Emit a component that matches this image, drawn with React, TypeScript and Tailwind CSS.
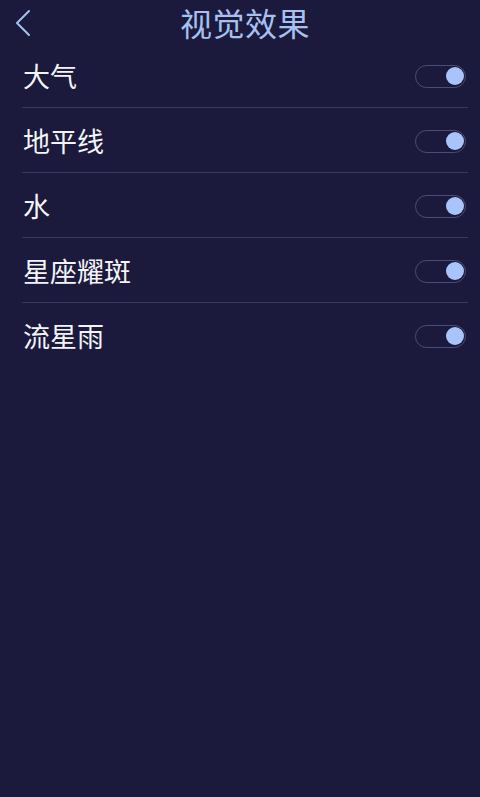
import React, { useState } from 'react';

const items = ['大气', '地平线', '水', '星座耀斑', '流星雨'];

const Toggle = ({ on, onClick }: { on: boolean; onClick: () => void }) => (
  <button
    onClick={onClick}
    className="relative w-[51px] h-[23px] rounded-full border-[1.5px] border-[#4a4e74] bg-transparent"
  >
    <span
      className={`absolute top-[1px] w-[18px] h-[18px] rounded-full transition-all ${
        on ? 'right-[1.5px] bg-[#a9c4fb]' : 'left-[1.5px] bg-[#4a4e74]'
      }`}
    />
  </button>
);

export default function App(): React.JSX.Element {
  const [state, setState] = useState<boolean[]>(items.map(() => true));

  return (
    <div
      className="w-[480px] h-[797px] bg-[#1b1a3c] overflow-hidden"
      style={{ fontFamily: '"Noto Sans CJK SC", "Noto Sans", sans-serif' }}
    >
      <div className="relative h-[43px] flex items-center justify-center">
        <button className="absolute left-[13px] top-[9px] w-[20px] h-[28px]">
          <svg viewBox="0 0 20 28" className="w-[20px] h-[28px]" fill="none">
            <path d="M16 2 L4 14 L16 26" stroke="#a6c0f0" strokeWidth="2" strokeLinecap="round" strokeLinejoin="round" />
          </svg>
        </button>
        <h1 className="ml-[10px] text-[32px] leading-none text-[#a6c0f0] tracking-[0.5px]">视觉效果</h1>
      </div>
      <ul className="pl-[22px] pr-[12px]">
        {items.map((label, i) => (
          <li
            key={label}
            className="h-[65px] flex items-center justify-between border-b-[1.5px] border-[#383a66] last:border-b-0"
          >
            <span className="text-[27px] leading-none text-[#f4f4f8] pl-[1px]">{label}</span>
            <span className="mr-[2px] mt-[2px] flex items-center">
              <Toggle on={state[i]} onClick={() => setState(s => s.map((v, j) => (j === i ? !v : v)))} />
            </span>
          </li>
        ))}
      </ul>
    </div>
  );
}
